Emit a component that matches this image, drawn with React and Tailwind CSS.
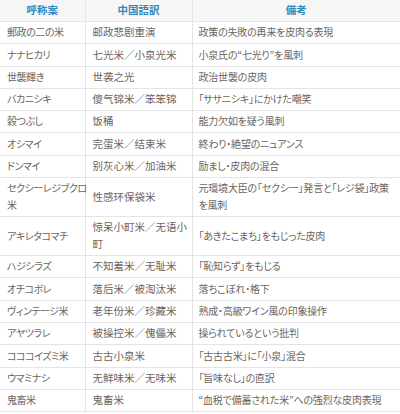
import React from "react";

const rows = [
  ["郵政の二の米", "邮政悲剧重演", "政策の失敗の再来を皮肉る表現"],
  ["ナナヒカリ", "七光米／小泉光米", "小泉氏の“七光り”を風刺"],
  ["世襲輝き", "世袭之光", "政治世襲の皮肉"],
  ["バカニシキ", "傻气锦米／笨笨锦", "「ササニシキ」にかけた嘲笑"],
  ["穀つぶし", "饭桶", "能力欠如を疑う風刺"],
  ["オシマイ", "完蛋米／结束米", "終わり・絶望のニュアンス"],
  ["ドンマイ", "别灰心米／加油米", "励まし・皮肉の混合"],
  [["セクシーレジブクロ", "米"], "性感环保袋米", ["元環境大臣の「セクシー」発言と「レジ袋」政策", "を風刺"]],
  ["アキレタコマチ", ["惊呆小町米／无语小", "町"], "「あきたこまち」をもじった皮肉"],
  ["ハジシラズ", "不知羞米／无耻米", "「恥知らず」をもじる"],
  ["オチコボレ", "落后米／被淘汰米", "落ちこぼれ・格下"],
  ["ヴィンテージ米", "老年份米／珍藏米", "熟成・高級ワイン風の印象操作"],
  ["アヤツラレ", "被操控米／傀儡米", "操られているという批判"],
  ["コココイズミ米", "古古小泉米", "「古古古米」に「小泉」混合"],
  ["ウマミナシ", "无鲜味米／无味米", "「旨味なし」の直訳"],
  ["鬼畜米", "鬼畜米", "“血税で備蓄された米”への強烈な皮肉表現"],
];

function Cell({ v }) {
  if (Array.isArray(v)) {
    return (
      <>
        {v.map((t, i) => (
          <div key={i}>{t}</div>
        ))}
      </>
    );
  }
  return v;
}

export default function App() {
  return (
    <div className="w-[400px] h-[414px] bg-white overflow-hidden">
      <table className="w-[400px] table-fixed border-collapse text-[10.5px] leading-[16.7px] text-[#6c6460]">
        <colgroup>
          <col className="w-[85px]" />
          <col className="w-[107px]" />
          <col className="w-[208px]" />
        </colgroup>
        <thead>
          <tr className="bg-[#f6f6f6]">
            <th className="border-b border-r border-[#e4e4e4] pt-[2px] pb-[2.3px] font-bold text-[#3189c2] text-center [font-family:'Noto_Sans_CJK_JP',sans-serif]">
              呼称案
            </th>
            <th className="border-b border-r border-[#e4e4e4] pt-[2px] pb-[2.3px] font-bold text-[#3189c2] text-center [font-family:'Noto_Sans_CJK_JP',sans-serif]">
              中国語訳
            </th>
            <th className="border-b border-[#e4e4e4] pt-[2px] pb-[2.3px] font-bold text-[#3189c2] text-center [font-family:'Noto_Sans_CJK_JP',sans-serif]">
              備考
            </th>
          </tr>
        </thead>
        <tbody>
          {rows.map((r, i) => (
            <tr key={i}>
              <td className="border-b border-r border-[#e4e4e4] px-[7px] py-[2.3px] align-middle whitespace-nowrap text-[10px] tracking-[-0.45px] [font-family:'Noto_Sans_CJK_JP',sans-serif] [font-feature-settings:'palt']">
                <Cell v={r[0]} />
              </td>
              <td className="border-b border-r border-[#e4e4e4] px-[7px] py-[2.3px] align-middle whitespace-nowrap [font-family:'Noto_Sans_CJK_SC',sans-serif]">
                <Cell v={r[1]} />
              </td>
              <td className="border-b border-[#e4e4e4] pl-[6px] pr-[4px] py-[2.3px] align-middle whitespace-nowrap text-[10px] tracking-[-0.2px] [font-family:'Noto_Sans_CJK_JP',sans-serif] [font-feature-settings:'palt']">
                <Cell v={r[2]} />
              </td>
            </tr>
          ))}
        </tbody>
      </table>
    </div>
  );
}
